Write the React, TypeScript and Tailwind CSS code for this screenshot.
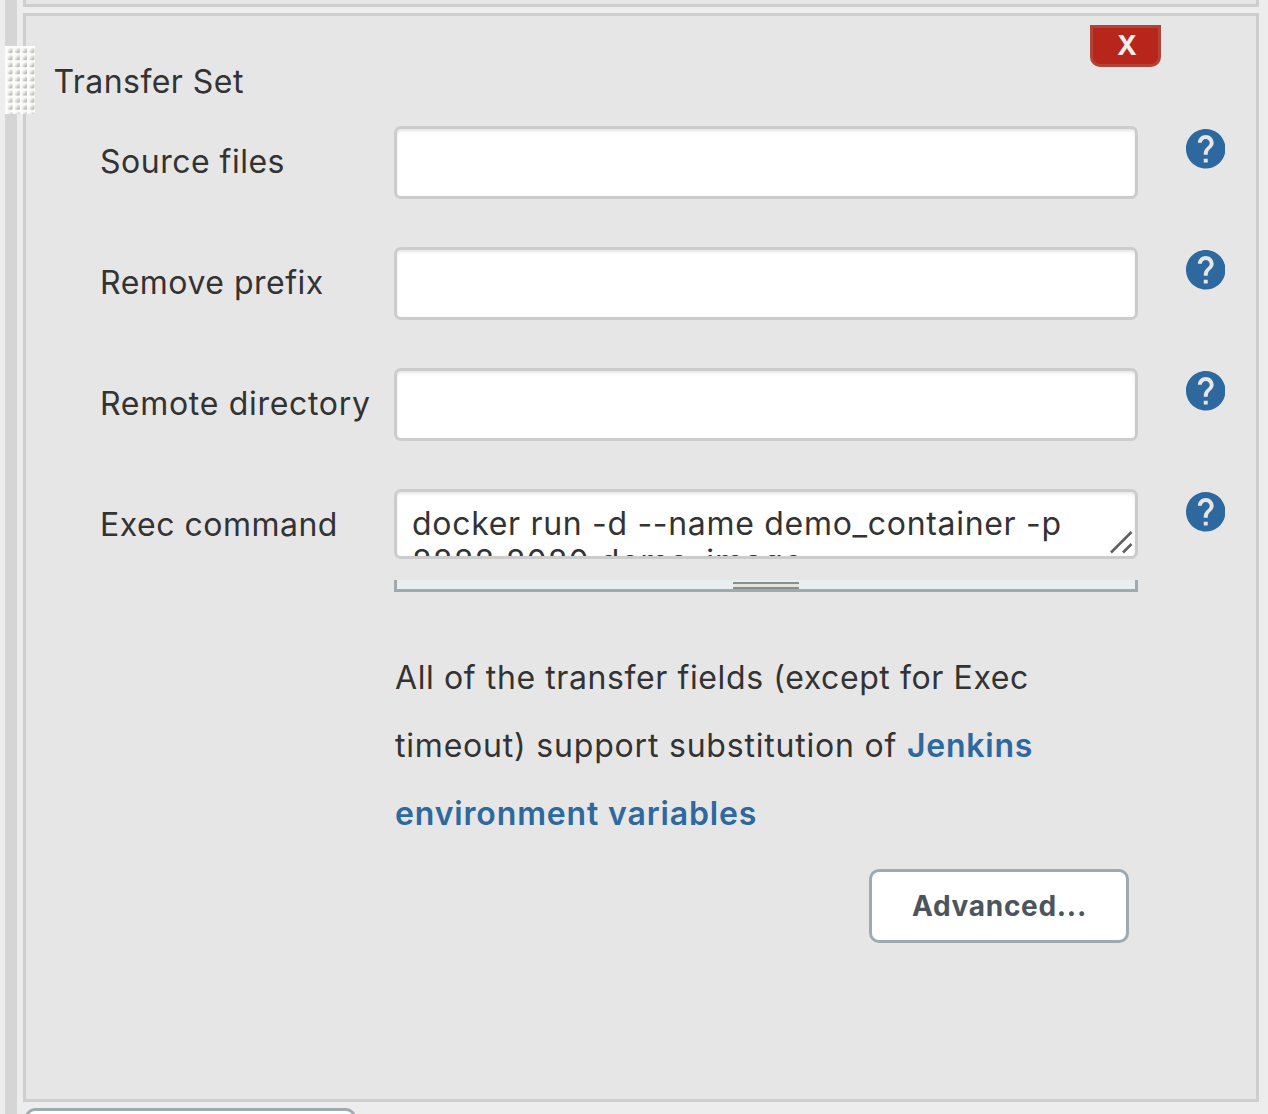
import { MdHelp } from "react-icons/md";

const FIELDS = [
  { name: "Source files", tracking: "tracking-[0.5px]" },
  { name: "Remove prefix", tracking: "tracking-[0.5px]" },
  { name: "Remote directory", tracking: "tracking-[0.7px]" },
];

function HelpIcon() {
  return (
    <button aria-label="Help" className="ml-[47.5px] mt-[2px] block size-[42px] shrink-0 overflow-hidden">
      <MdHelp viewBox="2 2 20 20" className="size-[39.5px] text-[#2d699e]" />
    </button>
  );
}

function Label({ children, tracking }: { children: string; tracking: string }) {
  return <label className={`w-[294px] shrink-0 whitespace-nowrap pt-[16px] leading-[40px] ${tracking}`}>{children}</label>;
}

function DragHandle() {
  return (
    <svg className="absolute left-[5px] top-[46px]" width="30" height="68">
      <defs>
        <linearGradient id="dot" x1="0" y1="0" x2="1" y2="1">
          <stop offset="0.25" stopColor="#f4f4f2" />
          <stop offset="0.85" stopColor="#b4b4b0" />
        </linearGradient>
        <pattern id="grip" x="2" y="1.5" width="7.3" height="7.1" patternUnits="userSpaceOnUse">
          <rect x="0.5" y="0.5" width="5" height="5" rx="1" fill="url(#dot)" />
        </pattern>
      </defs>
      <rect width="30" height="68" fill="#fdfdfb" />
      <rect x="2" y="1" width="28" height="67" fill="url(#grip)" />
    </svg>
  );
}

export default function App() {
  return (
    <div className="relative flex h-[1114px] w-[1268px] overflow-hidden bg-[#ededed] pl-[5px] font-['Inter',sans-serif] text-[32px] text-[#333]">
      <div className="mr-[6px] w-[12px] shrink-0 bg-[#d5d5d5]" />
      <main className="flex w-[1236px] shrink-0 flex-col">
        <div className="h-[7px] shrink-0 border-[3px] border-t-0 border-[#cecece] bg-[#e6e6e6]" />
        <section className="mt-[6px] h-[1089px] shrink-0 border-[3px] border-[#cecece] bg-[#e6e6e6]">
          <header className="flex h-[110px] items-start justify-between pl-[27.5px] pr-[95px]">
            <h2 className="pt-[46px] leading-[40px] tracking-[0.45px]">Transfer Set</h2>
            <button className="mt-[9px] h-[42px] w-[71px] rounded-b-[10px] border-[3px] border-[#b14438] bg-[#b8251b] pl-[3px] text-[27px] font-bold leading-[36px] text-[#efefef]">X</button>
          </header>
          <div className="flex flex-col gap-[48px] pl-[74px]">
            {FIELDS.map(({ name, tracking }) => (
              <div key={name} className="flex h-[73px]">
                <Label tracking={tracking}>{name}</Label>
                <input aria-label={name} className="h-[73px] w-[744px] shrink-0 rounded-[7px] border-[3px] border-[#cccccc] bg-white shadow-[inset_0_2px_3px_rgba(0,0,0,0.1)] outline-none" />
                <HelpIcon />
              </div>
            ))}
            <div className="flex h-[104px]">
              <Label tracking="tracking-[0.5px]">Exec command</Label>
              <div className="w-[744px] shrink-0">
                <div className="relative h-[70px] overflow-hidden rounded-[7px] border-[3px] border-[#cccccc] bg-white px-[15px] pt-[13px] leading-[38px] shadow-[inset_0_2px_3px_rgba(0,0,0,0.1)]">
                  <p className="whitespace-nowrap tracking-[0.69px]">docker run -d --name demo_container -p</p>
                  <p className="whitespace-nowrap tracking-[1.05px]">8888:8080 demo_image</p>
                  <svg className="absolute bottom-[2px] right-[2px]" width="24" height="24" fill="none" stroke="#606060" strokeWidth="2.6">
                    <path d="M2 22.5 L22.5 2 M14 22.5 L22.5 14" />
                  </svg>
                </div>
                <div className="mt-[21px] flex h-[12px] items-start justify-center border-[3px] border-t-0 border-[#9eaab1] bg-[#e9eef1] pt-[2px]">
                  <div className="h-[7px] w-[66px] border-y-2 border-[#8c8f88] bg-[#e3e5e1]" />
                </div>
              </div>
              <HelpIcon />
            </div>
          </div>
          <p className="ml-[369px] mt-[51px] whitespace-nowrap leading-[68px]">
            <span className="tracking-[0.6px]">All of the transfer fields (except for Exec</span>
            <br />
            <span className="tracking-[0.8px]">timeout) support substitution of </span>
            <a className="font-semibold tracking-[0.75px] text-[#2d699e]">Jenkins</a>
            <br />
            <a className="font-semibold tracking-[0.85px] text-[#2d699e]">environment variables</a>
          </p>
          <div className="mt-[21px] flex justify-end pr-[127.5px]">
            <button className="h-[74px] w-[260px] rounded-[10px] border-[3px] border-[#9eaab1] bg-white pl-[2px] pr-0 text-[28px] font-bold tracking-[0.7px] text-[#4c545c]">Advanced...</button>
          </div>
        </section>
        <div className="ml-[2px] mt-[6px] h-[72px] w-[331px] shrink-0 rounded-[10px] border-[3px] border-[#9eaab1] bg-white" />
      </main>
      <DragHandle />
    </div>
  );
}
